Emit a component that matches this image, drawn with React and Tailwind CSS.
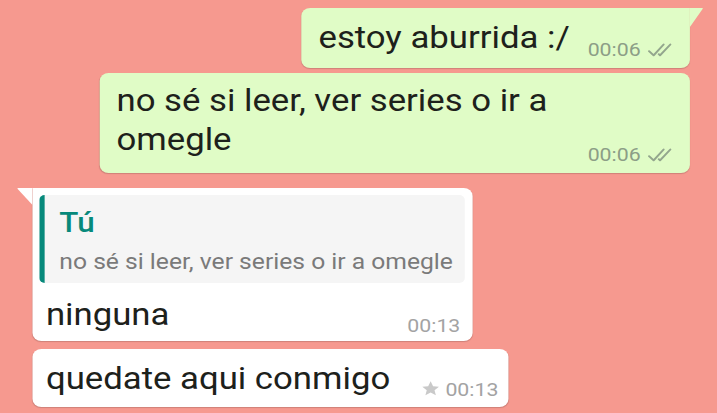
import React from 'react';

const Checks = () => (
    <svg width="24" height="14" viewBox="0 0 24 14" fill="none" className="mb-[5px]">
        <path d="M1.5 8.2 L5.6 12.3 L14.5 1.5" stroke="#93a68d" strokeWidth="1.9" strokeLinecap="round" strokeLinejoin="round" />
        <path d="M10.2 11.2 L11.3 12.3 L20.5 1.5" stroke="#93a68d" strokeWidth="1.9" strokeLinecap="round" strokeLinejoin="round" />
    </svg>
);

const Star = () => (
    <svg width="17" height="17" viewBox="0 0 24 24" className="mb-[5px]">
        <path d="M12 1.8l3.1 6.9 7.4.7-5.6 4.9 1.7 7.3L12 17.8l-6.6 3.8 1.7-7.3L1.5 9.4l7.4-.7z" fill="#c9c9c9" />
    </svg>
);

const OutTail = () => (
    <svg width="12" height="19" viewBox="0 0 12 19" className="absolute left-full top-0">
        <path d="M0 0 H11 Q12 0 11.3 1 L0 19 Z" fill="#e0fcc6" />
    </svg>
);

const InTail = () => (
    <svg width="14" height="17" viewBox="0 0 14 17" className="absolute right-full top-0">
        <path d="M14 0 H1.2 Q0 0 0.8 1 L14 17 Z" fill="#ffffff" />
    </svg>
);

const msgText = "text-[31px] leading-[36px] text-[#1d211b]";

export default function App() {
    return (
        <div className="w-[717px] h-[413px] overflow-hidden bg-[#f6998f]">
            <div className="w-[640px] origin-top-left scale-x-[1.12] flex flex-col pt-[8px] font-[Roboto,sans-serif]">

                {/* sent: single line */}
                <div className="relative self-end mr-[24px] flex items-end bg-[#e0fcc6] rounded-lg rounded-tr-none shadow-[0_1px_1px_rgba(0,0,0,0.16)] pl-[15px] pr-[14px] pt-[12px] pb-[6px]">
                    <OutTail />
                    <span className={`${msgText} pb-[6px]`}>estoy aburrida :/</span>
                    <span className="ml-[16px] text-[19px] leading-[24px] text-[#8c9e86]">00:06</span>
                    <span className="ml-[6px]"><Checks /></span>
                </div>

                {/* sent: two lines */}
                <div className="self-end mr-[24px] mt-[5px] w-[527px] flex flex-col bg-[#e0fcc6] rounded-lg shadow-[0_1px_1px_rgba(0,0,0,0.16)] pl-[15px] pr-[14px] pt-[8px] pb-[6px]">
                    <p className="text-[31px] leading-[39px] text-[#1d211b] pr-[20px]">no sé si leer, ver series o ir a omegle</p>
                    <div className="flex items-end justify-end -mt-[16px]">
                        <span className="text-[19px] leading-[24px] text-[#8c9e86]">00:06</span>
                        <span className="ml-[6px]"><Checks /></span>
                    </div>
                </div>

                {/* received: reply with quote */}
                <div className="relative self-start ml-[29px] mt-[15px] w-[393px] bg-white rounded-lg rounded-tl-none shadow-[0_1px_1px_rgba(0,0,0,0.16)] pt-[7px]">
                    <InTail />
                    <div className="ml-[6px] mr-[7px] bg-[#f5f5f5] rounded-[5px] border-l-[5px] border-[#07897b] pl-[13px] pr-[10px] pt-[12px] pb-[7px]">
                        <p className="text-[28px] leading-[32px] font-medium text-[#07897b]">Tú</p>
                        <p className="mt-[9px] text-[22px] leading-[28px] text-[#7a7a7a] whitespace-nowrap">no sé si leer, ver series o ir a omegle</p>
                    </div>
                    <div className="flex items-end justify-between mt-[14px] pl-[12px] pr-[11px] pb-[3px]">
                        <span className={`${msgText} pb-[5px]`}>ninguna</span>
                        <span className="text-[19px] leading-[24px] text-[#a3a3a3]">00:13</span>
                    </div>
                </div>

                {/* received: plain */}
                <div className="self-start ml-[29px] mt-[8px] w-[425px] flex items-end justify-between bg-white rounded-lg shadow-[0_1px_1px_rgba(0,0,0,0.16)] pl-[12px] pr-[9px] pt-[12px] pb-[5px]">
                    <span className={`${msgText} pb-[5px]`}>quedate aqui conmigo</span>
                    <div className="flex items-end gap-[5px]">
                        <Star />
                        <span className="text-[19px] leading-[24px] text-[#a3a3a3]">00:13</span>
                    </div>
                </div>

            </div>
        </div>
    );
}
